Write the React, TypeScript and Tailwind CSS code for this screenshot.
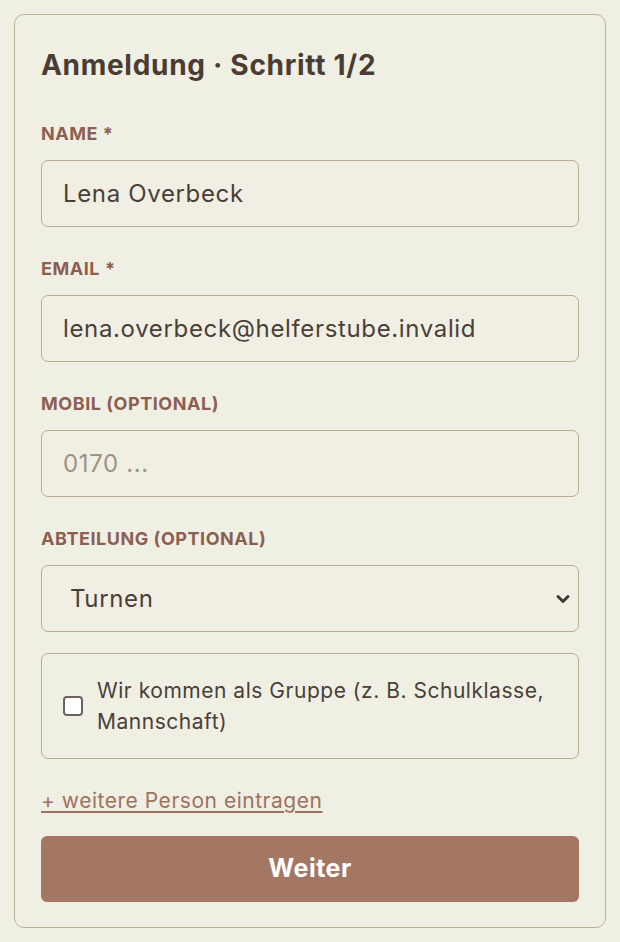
import { ChevronDown } from 'lucide-react';

const font = { fontFamily: 'Inter, "Noto Sans", sans-serif' };

function Field({ label, children }: { label: string; children: React.ReactNode }) {
  return (
    <div className="flex flex-col">
      <label className="text-[18px] leading-[24px] font-bold uppercase tracking-[0.03em] text-[#8c5f51]">{label}</label>
      <div className="mt-[14px]">{children}</div>
    </div>
  );
}

const inputCls =
  'w-full h-[67px] rounded-[7px] border border-[#b9ad91] bg-[#f1efe4] px-[21px] text-[24px] tracking-[0.027em] text-[#4a3f38] placeholder:text-[#9c9484] outline-none';

export default function App() {
  return (
    <div className="min-h-screen bg-[#f0efe4] p-[14px]" style={font}>
      <form className="rounded-[10px] border border-[#b8b295] px-[26px] pt-[32px] pb-[25px] flex flex-col">
        <h1 className="text-[28px] leading-[36px] font-bold tracking-[0.025em] text-[#4a3b33]">Anmeldung · Schritt 1/2</h1>

        <div className="mt-[39px] flex flex-col gap-[30px]">
          <Field label="Name *">
            <input className={inputCls} defaultValue="Lena Overbeck" />
          </Field>
          <Field label="Email *">
            <input className={inputCls} defaultValue="lena.overbeck@helferstube.invalid" />
          </Field>
          <Field label="Mobil (optional)">
            <input className={inputCls} placeholder="0170 ..." />
          </Field>
          <Field label="Abteilung (optional)">
            <div className="relative">
              <select className={inputCls + ' appearance-none pl-[28px]'} defaultValue="Turnen">
                <option>Turnen</option>
                <option>Fußball</option>
                <option>Leichtathletik</option>
              </select>
              <ChevronDown className="absolute right-[6px] top-1/2 -translate-y-1/2 h-[20px] w-[20px] text-[#3f3631] pointer-events-none" strokeWidth={3.5} />
            </div>
          </Field>
        </div>

        <label className="mt-[21px] flex items-center gap-[14px] rounded-[7px] border border-[#b9ad91] pl-[21px] pr-[24px] py-[21px] text-[21px] leading-[31px] tracking-[0.025em] text-[#4a3f38]">
          <span className="shrink-0 h-[20px] w-[20px] rounded-[4px] border-2 border-[#6b635d] bg-white" />
          <span>Wir kommen als Gruppe (z. B. Schulklasse, Mannschaft)</span>
        </label>

        <a href="#" className="mt-[28px] self-start text-[21px] leading-[28px] tracking-[0.025em] text-[#a0715f] underline underline-offset-[3px]">
          + weitere Person eintragen
        </a>

        <button type="button" className="mt-[21px] h-[66px] rounded-[6px] bg-[#a47764] text-[25px] font-bold tracking-[0.02em] text-white">
          Weiter
        </button>
      </form>
    </div>
  );
}
